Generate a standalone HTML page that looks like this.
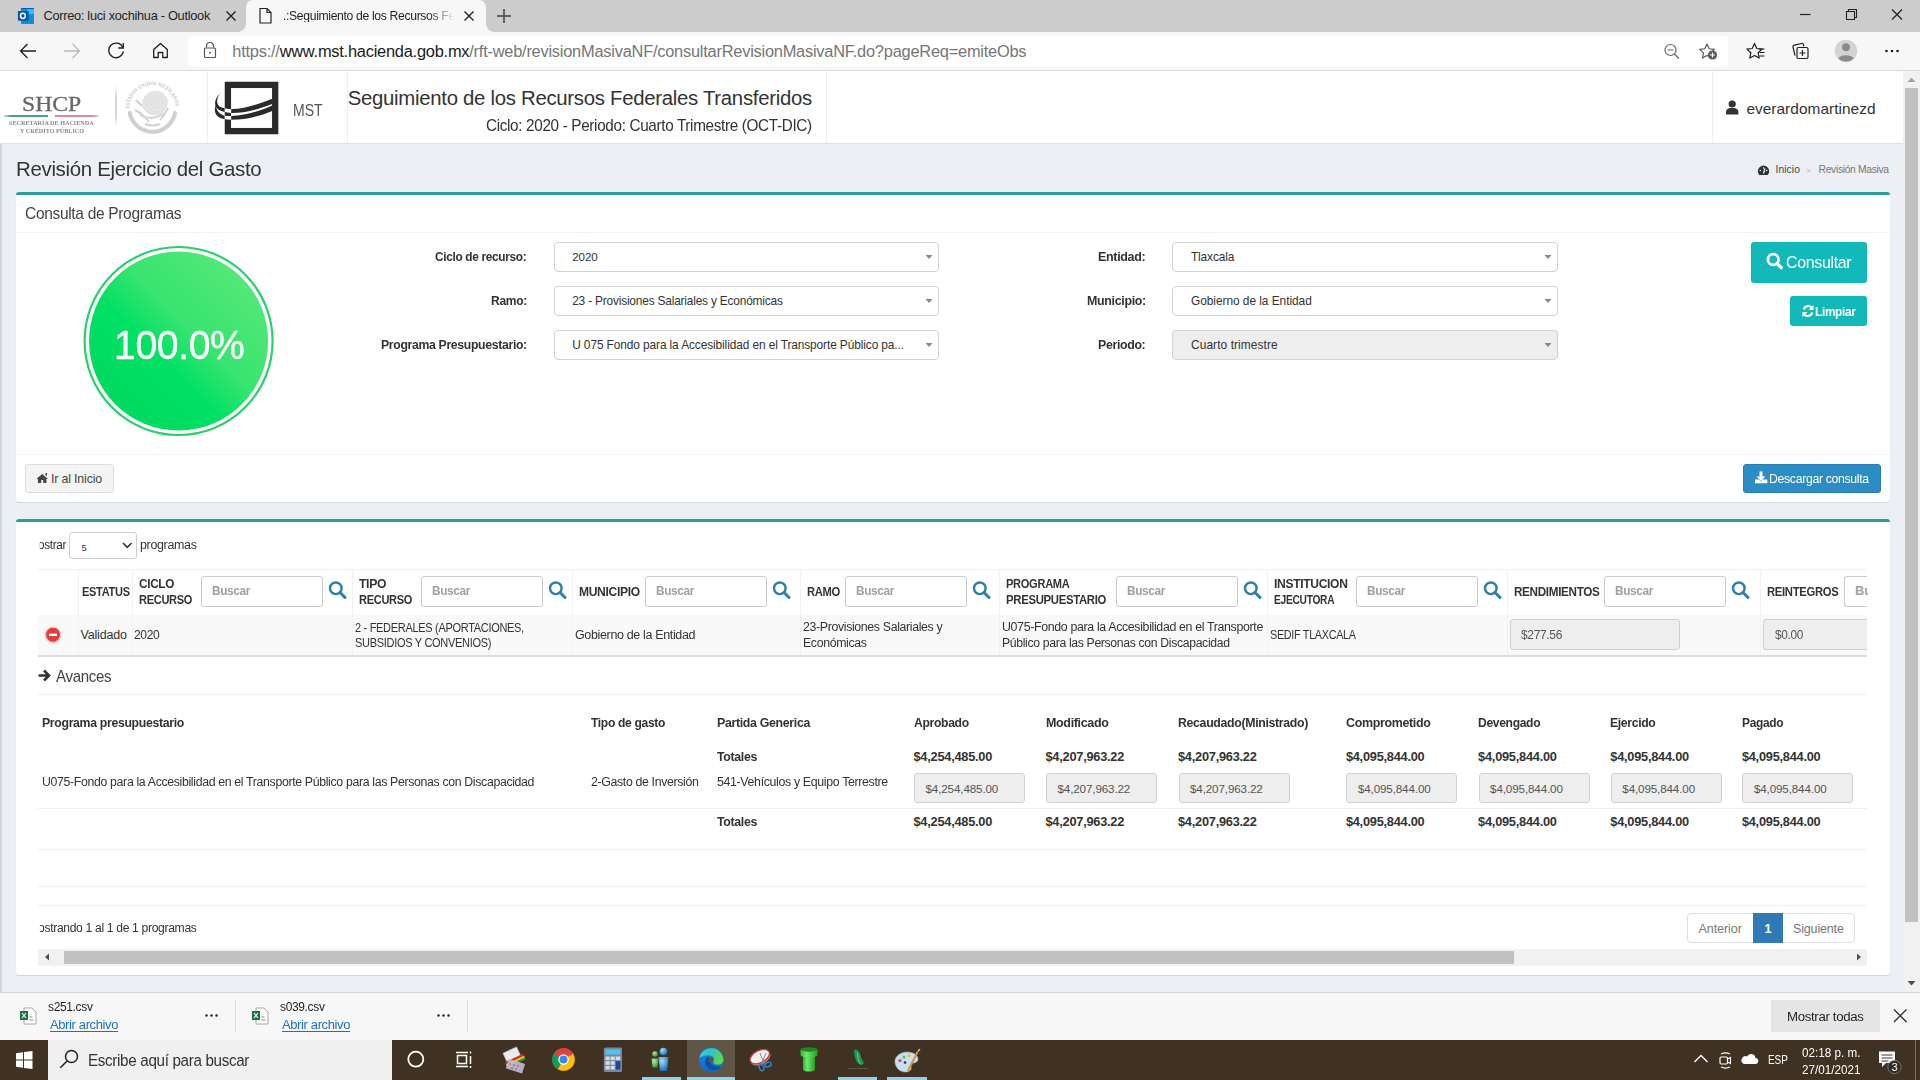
<!DOCTYPE html>
<html><head><meta charset="utf-8">
<style>
*{margin:0;padding:0;box-sizing:border-box}
html,body{width:1920px;height:1080px;overflow:hidden;font-family:"Liberation Sans",sans-serif;background:#ecf0f5;position:relative}
.a{position:absolute}
.t{position:absolute;white-space:nowrap;line-height:1}
svg.ov{position:absolute;left:0;top:0;width:1920px;height:1080px;overflow:visible}
</style></head><body>
<div class="a" style="left:0px;top:0px;width:1920px;height:32px;background:#cccccc;"></div>
<div class="a" style="left:246px;top:0px;width:240px;height:32px;background:#f7f7f7;border-radius:7px 7px 0 0"></div>
<div class="a" style="left:238px;top:24px;width:8px;height:8px;background:radial-gradient(circle at 0 0,#cccccc 7.5px,#f7f7f7 8px)"></div>
<div class="a" style="left:486px;top:24px;width:8px;height:8px;background:radial-gradient(circle at 100% 0,#cccccc 7.5px,#f7f7f7 8px)"></div>
<div class="a" style="left:0px;top:32px;width:1920px;height:38px;background:#f7f7f7;"></div>
<div class="a" style="left:0px;top:70px;width:1920px;height:1px;background:#dadada;"></div>
<div class="a" style="left:188px;top:36px;width:1540px;height:30px;background:#ffffff;border-radius:4px"></div>
<div class="a" style="left:0px;top:71px;width:1903px;height:921px;background:#ecf0f5;"></div>
<div class="a" style="left:0px;top:143px;width:2px;height:849px;background:#d2d6de;"></div>
<div class="a" style="left:0px;top:71px;width:1903px;height:72px;background:#ffffff;"></div>
<div class="a" style="left:0px;top:143px;width:1903px;height:1px;background:#dcdfe5;"></div>
<div class="a" style="left:207px;top:71px;width:1px;height:72px;background:#eeeeee;"></div>
<div class="a" style="left:347px;top:71px;width:1px;height:72px;background:#eeeeee;"></div>
<div class="a" style="left:826px;top:71px;width:1px;height:72px;background:#eeeeee;"></div>
<div class="a" style="left:1712px;top:71px;width:1px;height:72px;background:#eeeeee;"></div>
<div class="a" style="left:4px;top:115px;width:44px;height:2px;background:linear-gradient(90deg,rgba(69,164,136,0.3),#45a488 15%,#45a488)"></div>
<div class="a" style="left:55px;top:115px;width:44px;height:2px;background:linear-gradient(90deg,#e0889a,#e0889a 85%,rgba(224,136,154,0.3))"></div>
<div class="a" style="left:115px;top:85px;width:1.5px;height:43px;background:linear-gradient(180deg,rgba(210,210,210,0),#d4d4d4 30%,#d4d4d4 70%,rgba(210,210,210,0))"></div>
<div class="a" style="left:16px;top:192px;width:1874px;height:310px;background:#ffffff;border-top:3px solid #2a9d9e;border-radius:3px;box-shadow:0 1px 1px rgba(0,0,0,0.12)"></div>
<div class="a" style="left:16px;top:232px;width:1874px;height:1px;background:#f4f4f4;"></div>
<div class="a" style="left:554px;top:242px;width:385px;height:30px;background:#ffffff;border:1px solid #d2d2d2;border-radius:4px"></div>
<div class="a" style="left:554px;top:286px;width:385px;height:30px;background:#ffffff;border:1px solid #d2d2d2;border-radius:4px"></div>
<div class="a" style="left:554px;top:330px;width:385px;height:30px;background:#ffffff;border:1px solid #d2d2d2;border-radius:4px"></div>
<div class="a" style="left:1172px;top:242px;width:386px;height:30px;background:#ffffff;border:1px solid #d2d2d2;border-radius:4px"></div>
<div class="a" style="left:1172px;top:286px;width:386px;height:30px;background:#ffffff;border:1px solid #d2d2d2;border-radius:4px"></div>
<div class="a" style="left:1172px;top:330px;width:386px;height:30px;background:#eeeeee;border:1px solid #d2d2d2;border-radius:4px"></div>
<div class="a" style="left:1751px;top:242px;width:116px;height:41px;background:#13b8b8;border-radius:3px"></div>
<div class="a" style="left:1790px;top:296px;width:77px;height:30px;background:#13b8b8;border-radius:3px"></div>
<div class="a" style="left:16px;top:454px;width:1874px;height:1px;background:#f4f4f4;"></div>
<div class="a" style="left:25px;top:464px;width:89px;height:29px;background:#f4f4f4;border:1px solid #dddddd;border-radius:3px"></div>
<div class="a" style="left:1743px;top:464px;width:138px;height:29px;background:#2c8dc5;border:1px solid #267fb3;border-radius:3px"></div>
<div class="a" style="left:16px;top:519px;width:1874px;height:456px;background:#ffffff;border-top:3px solid #2a9d9e;border-radius:3px;box-shadow:0 1px 1px rgba(0,0,0,0.12)"></div>
<div class="a" style="left:69px;top:532px;width:68px;height:27px;background:#ffffff;border:1px solid #cfcfcf;border-radius:3px"></div>
<div class="a" style="left:38px;top:569px;width:1829px;height:1px;background:#f0f0f0;"></div>
<div class="a" style="left:38px;top:615px;width:1829px;height:41px;background:#f9f9f9;"></div>
<div class="a" style="left:38px;top:655px;width:1829px;height:2px;background:#dddddd;"></div>
<div class="a" style="left:78px;top:570px;width:1px;height:85px;background:#f2f2f2;"></div>
<div class="a" style="left:132px;top:570px;width:1px;height:85px;background:#f2f2f2;"></div>
<div class="a" style="left:352px;top:570px;width:1px;height:85px;background:#f2f2f2;"></div>
<div class="a" style="left:572px;top:570px;width:1px;height:85px;background:#f2f2f2;"></div>
<div class="a" style="left:800px;top:570px;width:1px;height:85px;background:#f2f2f2;"></div>
<div class="a" style="left:999px;top:570px;width:1px;height:85px;background:#f2f2f2;"></div>
<div class="a" style="left:1267px;top:570px;width:1px;height:85px;background:#f2f2f2;"></div>
<div class="a" style="left:1507px;top:570px;width:1px;height:85px;background:#f2f2f2;"></div>
<div class="a" style="left:1760px;top:570px;width:1px;height:85px;background:#f2f2f2;"></div>
<div class="a" style="left:201px;top:576px;width:122px;height:31px;background:#ffffff;border:1px solid #cccccc;border-radius:3px"></div>
<div class="a" style="left:421px;top:576px;width:122px;height:31px;background:#ffffff;border:1px solid #cccccc;border-radius:3px"></div>
<div class="a" style="left:645px;top:576px;width:122px;height:31px;background:#ffffff;border:1px solid #cccccc;border-radius:3px"></div>
<div class="a" style="left:845px;top:576px;width:122px;height:31px;background:#ffffff;border:1px solid #cccccc;border-radius:3px"></div>
<div class="a" style="left:1116px;top:576px;width:122px;height:31px;background:#ffffff;border:1px solid #cccccc;border-radius:3px"></div>
<div class="a" style="left:1356px;top:576px;width:122px;height:31px;background:#ffffff;border:1px solid #cccccc;border-radius:3px"></div>
<div class="a" style="left:1604px;top:576px;width:122px;height:31px;background:#ffffff;border:1px solid #cccccc;border-radius:3px"></div>
<div class="a" style="left:1844px;top:576px;width:23px;height:31px;background:#ffffff;border:1px solid #cccccc;border-right:none;border-radius:3px 0 0 3px"></div>
<div class="a" style="left:1510px;top:619px;width:170px;height:31px;background:#eeeeee;border:1px solid #d0d0d0;border-radius:3px"></div>
<div class="a" style="left:1763px;top:619px;width:104px;height:31px;background:#eeeeee;border:1px solid #d0d0d0;border-right:none;border-radius:3px 0 0 3px"></div>
<div class="a" style="left:38px;top:694px;width:1829px;height:1px;background:#f0f0f0;"></div>
<div class="a" style="left:914px;top:773px;width:111px;height:30px;background:#eeeeee;border:1px solid #d0d0d0;border-radius:3px"></div>
<div class="a" style="left:1046px;top:773px;width:111px;height:30px;background:#eeeeee;border:1px solid #d0d0d0;border-radius:3px"></div>
<div class="a" style="left:1178.5px;top:773px;width:111px;height:30px;background:#eeeeee;border:1px solid #d0d0d0;border-radius:3px"></div>
<div class="a" style="left:1346.4px;top:773px;width:111px;height:30px;background:#eeeeee;border:1px solid #d0d0d0;border-radius:3px"></div>
<div class="a" style="left:1478.6px;top:773px;width:111px;height:30px;background:#eeeeee;border:1px solid #d0d0d0;border-radius:3px"></div>
<div class="a" style="left:1610.8px;top:773px;width:111px;height:30px;background:#eeeeee;border:1px solid #d0d0d0;border-radius:3px"></div>
<div class="a" style="left:1742.4px;top:773px;width:111px;height:30px;background:#eeeeee;border:1px solid #d0d0d0;border-radius:3px"></div>
<div class="a" style="left:38px;top:808px;width:1829px;height:1px;background:#f0f0f0;"></div>
<div class="a" style="left:38px;top:849px;width:1829px;height:1px;background:#f0f0f0;"></div>
<div class="a" style="left:38px;top:886px;width:1829px;height:1px;background:#f0f0f0;"></div>
<div class="a" style="left:38px;top:905px;width:1829px;height:1px;background:#f0f0f0;"></div>
<div class="a" style="left:1687px;top:913px;width:168px;height:30px;background:#ffffff;border:1px solid #dddddd;border-radius:4px"></div>
<div class="a" style="left:1753px;top:913px;width:30px;height:30px;background:#2e79b6;border:1px solid #2e79b6"></div>
<div class="a" style="left:38px;top:949px;width:1829px;height:17px;background:#f1f1f1;"></div>
<div class="a" style="left:64px;top:951px;width:1450px;height:13px;background:#c1c1c1;"></div>
<div class="a" style="left:1903px;top:71px;width:17px;height:921px;background:#f1f1f1;"></div>
<div class="a" style="left:1905px;top:88px;width:13px;height:834px;background:#c1c1c1;"></div>
<div class="a" style="left:0px;top:992px;width:1920px;height:48px;background:#f7f7f7;border-top:1px solid #d6d6d6"></div>
<div class="a" style="left:235px;top:1000px;width:1px;height:32px;background:#dcdcdc;"></div>
<div class="a" style="left:467px;top:1000px;width:1px;height:32px;background:#dcdcdc;"></div>
<div class="a" style="left:1771px;top:1000px;width:109px;height:32px;background:#e5e5e5;border-radius:2px"></div>
<div class="a" style="left:0px;top:1040px;width:1920px;height:40px;background:#403222;"></div>
<div class="a" style="left:48px;top:1040px;width:344px;height:40px;background:#f0f0f0;"></div>
<div class="a" style="left:642px;top:1077px;width:39px;height:3px;background:#8fd4e6;"></div>
<div class="a" style="left:687px;top:1040px;width:48px;height:40px;background:#5f5646;"></div>
<div class="a" style="left:687px;top:1077px;width:48px;height:3px;background:#8fd4e6;"></div>
<div class="a" style="left:838px;top:1077px;width:39px;height:3px;background:#8fd4e6;"></div>
<div class="a" style="left:887px;top:1077px;width:40px;height:3px;background:#8fd4e6;"></div>
<div class="a" style="left:1915px;top:1040px;width:1px;height:40px;background:#7a7060;"></div>
<div class="t" style="left:43.5px;top:9.9px;font-size:12.79px;letter-spacing:-0.290px;font-weight:normal;color:#1f1f1f;font-family:'Liberation Sans',sans-serif;">Correo: luci xochihua - Outlook</div>
<div class="t" style="left:283.2px;top:9.6px;font-size:12.50px;letter-spacing:-0.350px;font-weight:normal;color:#1f1f1f;font-family:'Liberation Sans',sans-serif;transform:scaleX(0.9742);transform-origin:0 0;-webkit-mask-image:linear-gradient(90deg,#000 85%,transparent 100%)">.:Seguimiento de los Recursos Fe</div>
<div class="t" style="left:232.3px;top:43.0px;font-size:16.42px;letter-spacing:-0.239px;font-weight:normal;color:#767676;font-family:'Liberation Sans',sans-serif;">https://<span style="color:#1a1a1a">www.mst.hacienda.gob.mx</span>/rft-web/revisionMasivaNF/consultarRevisionMasivaNF.do?pageReq=emiteObs</div>
<div class="t" style="left:22.1px;top:92.7px;font-size:21.95px;letter-spacing:0.000px;font-weight:normal;color:#666668;font-family:'Liberation Serif',sans-serif;transform:scaleX(1.0790);transform-origin:0 0;-webkit-text-stroke:0.3px #666668">SHCP</div>
<div class="t" style="left:9.2px;top:120.3px;font-size:6.25px;letter-spacing:0.000px;font-weight:bold;color:#8a8a8a;font-family:'Liberation Serif',sans-serif;transform:scaleX(0.9847);transform-origin:0 0;">SECRETARÍA DE HACIENDA</div>
<div class="t" style="left:19.6px;top:127.8px;font-size:6.25px;letter-spacing:0.000px;font-weight:bold;color:#8a8a8a;font-family:'Liberation Serif',sans-serif;transform:scaleX(0.9872);transform-origin:0 0;">Y CRÉDITO PÚBLICO</div>
<div class="t" style="left:293.3px;top:101.5px;font-size:16.42px;letter-spacing:0.000px;font-weight:normal;color:#555555;font-family:'Liberation Sans',sans-serif;transform:scaleX(0.8552);transform-origin:0 0;">MST</div>
<div class="t" style="left:347.7px;top:87.5px;font-size:20.35px;letter-spacing:-0.283px;font-weight:normal;color:#333;font-family:'Liberation Sans',sans-serif;">Seguimiento de los Recursos Federales Transferidos</div>
<div class="t" style="left:485.9px;top:118.1px;font-size:15.70px;letter-spacing:-0.350px;font-weight:normal;color:#333;font-family:'Liberation Sans',sans-serif;transform:scaleX(0.9748);transform-origin:0 0;">Ciclo: 2020 - Periodo: Cuarto Trimestre (OCT-DIC)</div>
<div class="t" style="left:1746.4px;top:100.7px;font-size:15.41px;letter-spacing:0.039px;font-weight:normal;color:#333;font-family:'Liberation Sans',sans-serif;">everardomartinezd</div>
<div class="t" style="left:15.9px;top:158.7px;font-size:20.93px;letter-spacing:-0.350px;font-weight:normal;color:#333;font-family:'Liberation Sans',sans-serif;transform:scaleX(0.9787);transform-origin:0 0;">Revisión Ejercicio del Gasto</div>
<div class="t" style="left:1775.6px;top:165.4px;font-size:10.32px;letter-spacing:0.046px;font-weight:normal;color:#444;font-family:'Liberation Sans',sans-serif;">Inicio</div>
<div class="t" style="left:1806.2px;top:166.6px;font-size:7.99px;letter-spacing:0.000px;font-weight:normal;color:#aaa;font-family:'Liberation Sans',sans-serif;">&gt;</div>
<div class="t" style="left:1818.6px;top:165.4px;font-size:10.32px;letter-spacing:-0.336px;font-weight:normal;color:#777;font-family:'Liberation Sans',sans-serif;">Revisión Masiva</div>
<div class="t" style="left:24.9px;top:205.6px;font-size:15.99px;letter-spacing:-0.350px;font-weight:normal;color:#444;font-family:'Liberation Sans',sans-serif;transform:scaleX(0.9730);transform-origin:0 0;">Consulta de Programas</div>
<div class="t" style="left:435.0px;top:250.3px;font-size:13.08px;letter-spacing:-0.350px;font-weight:bold;color:#333;font-family:'Liberation Sans',sans-serif;transform:scaleX(0.9057);transform-origin:0 0;">Ciclo de recurso:</div>
<div class="t" style="left:490.5px;top:294.3px;font-size:13.08px;letter-spacing:-0.350px;font-weight:bold;color:#333;font-family:'Liberation Sans',sans-serif;transform:scaleX(0.9215);transform-origin:0 0;">Ramo:</div>
<div class="t" style="left:380.5px;top:338.3px;font-size:13.08px;letter-spacing:-0.350px;font-weight:bold;color:#333;font-family:'Liberation Sans',sans-serif;transform:scaleX(0.9358);transform-origin:0 0;">Programa Presupuestario:</div>
<div class="t" style="left:1098.0px;top:250.3px;font-size:13.08px;letter-spacing:-0.350px;font-weight:bold;color:#333;font-family:'Liberation Sans',sans-serif;transform:scaleX(0.9568);transform-origin:0 0;">Entidad:</div>
<div class="t" style="left:1086.5px;top:294.3px;font-size:13.08px;letter-spacing:-0.350px;font-weight:bold;color:#333;font-family:'Liberation Sans',sans-serif;transform:scaleX(0.9513);transform-origin:0 0;">Municipio:</div>
<div class="t" style="left:1098.0px;top:338.3px;font-size:13.08px;letter-spacing:-0.350px;font-weight:bold;color:#333;font-family:'Liberation Sans',sans-serif;transform:scaleX(0.9429);transform-origin:0 0;">Periodo:</div>
<div class="t" style="left:572.2px;top:251.2px;font-size:11.63px;letter-spacing:-0.085px;font-weight:normal;color:#333;font-family:'Liberation Sans',sans-serif;">2020</div>
<div class="t" style="left:572.2px;top:296.0px;font-size:11.92px;letter-spacing:-0.197px;font-weight:normal;color:#333;font-family:'Liberation Sans',sans-serif;">23 - Provisiones Salariales y Económicas</div>
<div class="t" style="left:572.2px;top:340.0px;font-size:11.92px;letter-spacing:-0.111px;font-weight:normal;color:#333;font-family:'Liberation Sans',sans-serif;">U 075 Fondo para la Accesibilidad en el Transporte Público pa...</div>
<div class="t" style="left:1191.0px;top:252.0px;font-size:11.92px;letter-spacing:-0.149px;font-weight:normal;color:#333;font-family:'Liberation Sans',sans-serif;">Tlaxcala</div>
<div class="t" style="left:1191.0px;top:296.0px;font-size:11.92px;letter-spacing:-0.047px;font-weight:normal;color:#333;font-family:'Liberation Sans',sans-serif;">Gobierno de la Entidad</div>
<div class="t" style="left:1191.0px;top:340.0px;font-size:11.92px;letter-spacing:0.086px;font-weight:normal;color:#333;font-family:'Liberation Sans',sans-serif;">Cuarto trimestre</div>
<div class="t" style="left:1786.3px;top:254.6px;font-size:16.86px;letter-spacing:-0.350px;font-weight:normal;color:#ffffff;font-family:'Liberation Sans',sans-serif;transform:scaleX(0.9470);transform-origin:0 0;">Consultar</div>
<div class="t" style="left:1814.5px;top:305.2px;font-size:13.23px;letter-spacing:-0.350px;font-weight:bold;color:#ffffff;font-family:'Liberation Sans',sans-serif;transform:scaleX(0.8961);transform-origin:0 0;">Limpiar</div>
<div class="t" style="left:50.9px;top:472.6px;font-size:12.35px;letter-spacing:-0.137px;font-weight:normal;color:#444;font-family:'Liberation Sans',sans-serif;">Ir al Inicio</div>
<div class="t" style="left:1768.9px;top:472.8px;font-size:12.94px;letter-spacing:-0.350px;font-weight:normal;color:#ffffff;font-family:'Liberation Sans',sans-serif;transform:scaleX(0.9489);transform-origin:0 0;">Descargar consulta</div>
<div class="t" style="left:37.5px;top:538.2px;font-size:13.26px;letter-spacing:-0.350px;font-weight:normal;color:#333;font-family:'Liberation Sans',sans-serif;transform:scaleX(0.8877);transform-origin:0 0;clip-path:inset(0 0 0 2px)">ostrar</div>
<div class="t" style="left:81.6px;top:543.4px;font-size:9.45px;letter-spacing:0.000px;font-weight:normal;color:#333;font-family:'Liberation Sans',sans-serif;">5</div>
<div class="t" style="left:139.5px;top:538.2px;font-size:13.26px;letter-spacing:-0.350px;font-weight:normal;color:#333;font-family:'Liberation Sans',sans-serif;transform:scaleX(0.9399);transform-origin:0 0;">programas</div>
<div class="t" style="left:81.5px;top:585.7px;font-size:12.65px;letter-spacing:-0.350px;font-weight:bold;color:#333;font-family:'Liberation Sans',sans-serif;transform:scaleX(0.8737);transform-origin:0 0;">ESTATUS</div>
<div class="t" style="left:139.0px;top:577.7px;font-size:12.65px;letter-spacing:-0.350px;font-weight:bold;color:#333;font-family:'Liberation Sans',sans-serif;transform:scaleX(0.9327);transform-origin:0 0;">CICLO</div>
<div class="t" style="left:139.0px;top:594.4px;font-size:12.65px;letter-spacing:-0.350px;font-weight:bold;color:#333;font-family:'Liberation Sans',sans-serif;transform:scaleX(0.8733);transform-origin:0 0;">RECURSO</div>
<div class="t" style="left:359.0px;top:577.7px;font-size:12.65px;letter-spacing:-0.350px;font-weight:bold;color:#333;font-family:'Liberation Sans',sans-serif;transform:scaleX(0.9623);transform-origin:0 0;">TIPO</div>
<div class="t" style="left:359.0px;top:594.4px;font-size:12.65px;letter-spacing:-0.350px;font-weight:bold;color:#333;font-family:'Liberation Sans',sans-serif;transform:scaleX(0.8733);transform-origin:0 0;">RECURSO</div>
<div class="t" style="left:578.8px;top:585.7px;font-size:12.65px;letter-spacing:-0.350px;font-weight:bold;color:#333;font-family:'Liberation Sans',sans-serif;transform:scaleX(0.9554);transform-origin:0 0;">MUNICIPIO</div>
<div class="t" style="left:806.7px;top:585.7px;font-size:12.65px;letter-spacing:-0.350px;font-weight:bold;color:#333;font-family:'Liberation Sans',sans-serif;transform:scaleX(0.8856);transform-origin:0 0;">RAMO</div>
<div class="t" style="left:1006.1px;top:577.7px;font-size:12.65px;letter-spacing:-0.350px;font-weight:bold;color:#333;font-family:'Liberation Sans',sans-serif;transform:scaleX(0.8772);transform-origin:0 0;">PROGRAMA</div>
<div class="t" style="left:1006.1px;top:594.4px;font-size:12.65px;letter-spacing:-0.350px;font-weight:bold;color:#333;font-family:'Liberation Sans',sans-serif;transform:scaleX(0.8975);transform-origin:0 0;">PRESUPUESTARIO</div>
<div class="t" style="left:1273.8px;top:577.7px;font-size:12.65px;letter-spacing:-0.350px;font-weight:bold;color:#333;font-family:'Liberation Sans',sans-serif;transform:scaleX(0.9560);transform-origin:0 0;">INSTITUCION</div>
<div class="t" style="left:1273.8px;top:594.4px;font-size:12.65px;letter-spacing:-0.350px;font-weight:bold;color:#333;font-family:'Liberation Sans',sans-serif;transform:scaleX(0.8082);transform-origin:0 0;">EJECUTORA</div>
<div class="t" style="left:1513.9px;top:585.7px;font-size:12.65px;letter-spacing:-0.350px;font-weight:bold;color:#333;font-family:'Liberation Sans',sans-serif;transform:scaleX(0.9248);transform-origin:0 0;">RENDIMIENTOS</div>
<div class="t" style="left:1767.1px;top:585.7px;font-size:12.65px;letter-spacing:-0.350px;font-weight:bold;color:#333;font-family:'Liberation Sans',sans-serif;transform:scaleX(0.8910);transform-origin:0 0;">REINTEGROS</div>
<div class="t" style="left:212.0px;top:585.4px;font-size:12.79px;letter-spacing:-0.350px;font-weight:bold;color:#a0a0a0;font-family:'Liberation Sans',sans-serif;transform:scaleX(0.9226);transform-origin:0 0;">Buscar</div>
<div class="t" style="left:432.0px;top:585.4px;font-size:12.79px;letter-spacing:-0.350px;font-weight:bold;color:#a0a0a0;font-family:'Liberation Sans',sans-serif;transform:scaleX(0.9226);transform-origin:0 0;">Buscar</div>
<div class="t" style="left:656.0px;top:585.4px;font-size:12.79px;letter-spacing:-0.350px;font-weight:bold;color:#a0a0a0;font-family:'Liberation Sans',sans-serif;transform:scaleX(0.9226);transform-origin:0 0;">Buscar</div>
<div class="t" style="left:856.0px;top:585.4px;font-size:12.79px;letter-spacing:-0.350px;font-weight:bold;color:#a0a0a0;font-family:'Liberation Sans',sans-serif;transform:scaleX(0.9226);transform-origin:0 0;">Buscar</div>
<div class="t" style="left:1127.0px;top:585.4px;font-size:12.79px;letter-spacing:-0.350px;font-weight:bold;color:#a0a0a0;font-family:'Liberation Sans',sans-serif;transform:scaleX(0.9226);transform-origin:0 0;">Buscar</div>
<div class="t" style="left:1367.0px;top:585.4px;font-size:12.79px;letter-spacing:-0.350px;font-weight:bold;color:#a0a0a0;font-family:'Liberation Sans',sans-serif;transform:scaleX(0.9226);transform-origin:0 0;">Buscar</div>
<div class="t" style="left:1615.0px;top:585.4px;font-size:12.79px;letter-spacing:-0.350px;font-weight:bold;color:#a0a0a0;font-family:'Liberation Sans',sans-serif;transform:scaleX(0.9226);transform-origin:0 0;">Buscar</div>
<div class="t" style="left:1855.0px;top:585.4px;font-size:12.79px;letter-spacing:0.000px;font-weight:bold;color:#a0a0a0;font-family:'Liberation Sans',sans-serif;clip-path:inset(0 4px 0 0)">Bu</div>
<div class="t" style="left:80.5px;top:628.9px;font-size:12.50px;letter-spacing:-0.178px;font-weight:normal;color:#333;font-family:'Liberation Sans',sans-serif;">Validado</div>
<div class="t" style="left:134.2px;top:628.9px;font-size:12.50px;letter-spacing:-0.350px;font-weight:normal;color:#333;font-family:'Liberation Sans',sans-serif;transform:scaleX(0.9633);transform-origin:0 0;">2020</div>
<div class="t" style="left:354.5px;top:621.5px;font-size:12.50px;letter-spacing:-0.350px;font-weight:normal;color:#333;font-family:'Liberation Sans',sans-serif;transform:scaleX(0.8801);transform-origin:0 0;">2 - FEDERALES (APORTACIONES,</div>
<div class="t" style="left:354.5px;top:637.1px;font-size:12.50px;letter-spacing:-0.350px;font-weight:normal;color:#333;font-family:'Liberation Sans',sans-serif;transform:scaleX(0.8820);transform-origin:0 0;">SUBSIDIOS Y CONVENIOS)</div>
<div class="t" style="left:574.8px;top:628.9px;font-size:12.50px;letter-spacing:-0.350px;font-weight:normal;color:#333;font-family:'Liberation Sans',sans-serif;transform:scaleX(0.9996);transform-origin:0 0;">Gobierno de la Entidad</div>
<div class="t" style="left:802.7px;top:620.8px;font-size:12.50px;letter-spacing:-0.350px;font-weight:normal;color:#333;font-family:'Liberation Sans',sans-serif;transform:scaleX(0.9860);transform-origin:0 0;">23-Provisiones Salariales y</div>
<div class="t" style="left:802.7px;top:637.3px;font-size:12.50px;letter-spacing:-0.350px;font-weight:normal;color:#333;font-family:'Liberation Sans',sans-serif;transform:scaleX(0.9837);transform-origin:0 0;">Económicas</div>
<div class="t" style="left:1001.7px;top:620.8px;font-size:12.50px;letter-spacing:-0.350px;font-weight:normal;color:#333;font-family:'Liberation Sans',sans-serif;transform:scaleX(0.9899);transform-origin:0 0;">U075-Fondo para la Accesibilidad en el Transporte</div>
<div class="t" style="left:1001.7px;top:637.3px;font-size:12.50px;letter-spacing:-0.350px;font-weight:normal;color:#333;font-family:'Liberation Sans',sans-serif;transform:scaleX(0.9784);transform-origin:0 0;">Público para las Personas con Discapacidad</div>
<div class="t" style="left:1270.3px;top:628.9px;font-size:12.50px;letter-spacing:-0.350px;font-weight:normal;color:#333;font-family:'Liberation Sans',sans-serif;transform:scaleX(0.8648);transform-origin:0 0;">SEDIF TLAXCALA</div>
<div class="t" style="left:1521.0px;top:629.1px;font-size:12.50px;letter-spacing:-0.350px;font-weight:normal;color:#555;font-family:'Liberation Sans',sans-serif;transform:scaleX(0.9603);transform-origin:0 0;">$277.56</div>
<div class="t" style="left:1774.5px;top:629.1px;font-size:12.50px;letter-spacing:-0.350px;font-weight:normal;color:#555;font-family:'Liberation Sans',sans-serif;transform:scaleX(0.9496);transform-origin:0 0;">$0.00</div>
<div class="t" style="left:55.9px;top:669.4px;font-size:15.99px;letter-spacing:-0.350px;font-weight:normal;color:#444;font-family:'Liberation Sans',sans-serif;transform:scaleX(0.9438);transform-origin:0 0;">Avances</div>
<div class="t" style="left:42.0px;top:716.9px;font-size:12.79px;letter-spacing:-0.350px;font-weight:bold;color:#333;font-family:'Liberation Sans',sans-serif;transform:scaleX(0.9623);transform-origin:0 0;">Programa presupuestario</div>
<div class="t" style="left:591.0px;top:716.9px;font-size:12.79px;letter-spacing:-0.350px;font-weight:bold;color:#333;font-family:'Liberation Sans',sans-serif;transform:scaleX(0.9452);transform-origin:0 0;">Tipo de gasto</div>
<div class="t" style="left:717.0px;top:716.9px;font-size:12.79px;letter-spacing:-0.350px;font-weight:bold;color:#333;font-family:'Liberation Sans',sans-serif;transform:scaleX(0.9687);transform-origin:0 0;">Partida Generica</div>
<div class="t" style="left:913.5px;top:716.9px;font-size:12.79px;letter-spacing:-0.350px;font-weight:bold;color:#333;font-family:'Liberation Sans',sans-serif;transform:scaleX(0.9526);transform-origin:0 0;">Aprobado</div>
<div class="t" style="left:1045.5px;top:716.9px;font-size:12.79px;letter-spacing:-0.350px;font-weight:bold;color:#333;font-family:'Liberation Sans',sans-serif;transform:scaleX(0.9774);transform-origin:0 0;">Modificado</div>
<div class="t" style="left:1178.0px;top:716.9px;font-size:12.79px;letter-spacing:-0.350px;font-weight:bold;color:#333;font-family:'Liberation Sans',sans-serif;transform:scaleX(0.9650);transform-origin:0 0;">Recaudado(Ministrado)</div>
<div class="t" style="left:1345.9px;top:716.9px;font-size:12.79px;letter-spacing:-0.350px;font-weight:bold;color:#333;font-family:'Liberation Sans',sans-serif;transform:scaleX(0.9747);transform-origin:0 0;">Comprometido</div>
<div class="t" style="left:1478.1px;top:716.9px;font-size:12.79px;letter-spacing:-0.350px;font-weight:bold;color:#333;font-family:'Liberation Sans',sans-serif;transform:scaleX(0.9464);transform-origin:0 0;">Devengado</div>
<div class="t" style="left:1610.3px;top:716.9px;font-size:12.79px;letter-spacing:-0.350px;font-weight:bold;color:#333;font-family:'Liberation Sans',sans-serif;transform:scaleX(0.9537);transform-origin:0 0;">Ejercido</div>
<div class="t" style="left:1741.9px;top:716.9px;font-size:12.79px;letter-spacing:-0.350px;font-weight:bold;color:#333;font-family:'Liberation Sans',sans-serif;transform:scaleX(0.9336);transform-origin:0 0;">Pagado</div>
<div class="t" style="left:717.0px;top:750.6px;font-size:12.79px;letter-spacing:-0.350px;font-weight:bold;color:#333;font-family:'Liberation Sans',sans-serif;transform:scaleX(0.9680);transform-origin:0 0;">Totales</div>
<div class="t" style="left:717.0px;top:815.6px;font-size:12.79px;letter-spacing:-0.350px;font-weight:bold;color:#333;font-family:'Liberation Sans',sans-serif;transform:scaleX(0.9680);transform-origin:0 0;">Totales</div>
<div class="t" style="left:913.5px;top:750.6px;font-size:12.79px;letter-spacing:-0.242px;font-weight:bold;color:#333;font-family:'Liberation Sans',sans-serif;">$4,254,485.00</div>
<div class="t" style="left:913.5px;top:815.6px;font-size:12.79px;letter-spacing:-0.242px;font-weight:bold;color:#333;font-family:'Liberation Sans',sans-serif;">$4,254,485.00</div>
<div class="t" style="left:925.5px;top:783.1px;font-size:11.63px;letter-spacing:-0.129px;font-weight:normal;color:#555;font-family:'Liberation Sans',sans-serif;">$4,254,485.00</div>
<div class="t" style="left:1045.5px;top:750.6px;font-size:12.79px;letter-spacing:-0.242px;font-weight:bold;color:#333;font-family:'Liberation Sans',sans-serif;">$4,207,963.22</div>
<div class="t" style="left:1045.5px;top:815.6px;font-size:12.79px;letter-spacing:-0.242px;font-weight:bold;color:#333;font-family:'Liberation Sans',sans-serif;">$4,207,963.22</div>
<div class="t" style="left:1057.5px;top:783.1px;font-size:11.63px;letter-spacing:-0.129px;font-weight:normal;color:#555;font-family:'Liberation Sans',sans-serif;">$4,207,963.22</div>
<div class="t" style="left:1178.0px;top:750.6px;font-size:12.79px;letter-spacing:-0.242px;font-weight:bold;color:#333;font-family:'Liberation Sans',sans-serif;">$4,207,963.22</div>
<div class="t" style="left:1178.0px;top:815.6px;font-size:12.79px;letter-spacing:-0.242px;font-weight:bold;color:#333;font-family:'Liberation Sans',sans-serif;">$4,207,963.22</div>
<div class="t" style="left:1190.0px;top:783.1px;font-size:11.63px;letter-spacing:-0.129px;font-weight:normal;color:#555;font-family:'Liberation Sans',sans-serif;">$4,207,963.22</div>
<div class="t" style="left:1345.9px;top:750.6px;font-size:12.79px;letter-spacing:-0.242px;font-weight:bold;color:#333;font-family:'Liberation Sans',sans-serif;">$4,095,844.00</div>
<div class="t" style="left:1345.9px;top:815.6px;font-size:12.79px;letter-spacing:-0.242px;font-weight:bold;color:#333;font-family:'Liberation Sans',sans-serif;">$4,095,844.00</div>
<div class="t" style="left:1357.9px;top:783.1px;font-size:11.63px;letter-spacing:-0.129px;font-weight:normal;color:#555;font-family:'Liberation Sans',sans-serif;">$4,095,844.00</div>
<div class="t" style="left:1478.1px;top:750.6px;font-size:12.79px;letter-spacing:-0.242px;font-weight:bold;color:#333;font-family:'Liberation Sans',sans-serif;">$4,095,844.00</div>
<div class="t" style="left:1478.1px;top:815.6px;font-size:12.79px;letter-spacing:-0.242px;font-weight:bold;color:#333;font-family:'Liberation Sans',sans-serif;">$4,095,844.00</div>
<div class="t" style="left:1490.1px;top:783.1px;font-size:11.63px;letter-spacing:-0.129px;font-weight:normal;color:#555;font-family:'Liberation Sans',sans-serif;">$4,095,844.00</div>
<div class="t" style="left:1610.3px;top:750.6px;font-size:12.79px;letter-spacing:-0.242px;font-weight:bold;color:#333;font-family:'Liberation Sans',sans-serif;">$4,095,844.00</div>
<div class="t" style="left:1610.3px;top:815.6px;font-size:12.79px;letter-spacing:-0.242px;font-weight:bold;color:#333;font-family:'Liberation Sans',sans-serif;">$4,095,844.00</div>
<div class="t" style="left:1622.3px;top:783.1px;font-size:11.63px;letter-spacing:-0.129px;font-weight:normal;color:#555;font-family:'Liberation Sans',sans-serif;">$4,095,844.00</div>
<div class="t" style="left:1741.9px;top:750.6px;font-size:12.79px;letter-spacing:-0.242px;font-weight:bold;color:#333;font-family:'Liberation Sans',sans-serif;">$4,095,844.00</div>
<div class="t" style="left:1741.9px;top:815.6px;font-size:12.79px;letter-spacing:-0.242px;font-weight:bold;color:#333;font-family:'Liberation Sans',sans-serif;">$4,095,844.00</div>
<div class="t" style="left:1753.9px;top:783.1px;font-size:11.63px;letter-spacing:-0.129px;font-weight:normal;color:#555;font-family:'Liberation Sans',sans-serif;">$4,095,844.00</div>
<div class="t" style="left:42.0px;top:776.3px;font-size:12.50px;letter-spacing:-0.350px;font-weight:normal;color:#333;font-family:'Liberation Sans',sans-serif;transform:scaleX(0.9855);transform-origin:0 0;">U075-Fondo para la Accesibilidad en el Transporte Público para las Personas con Discapacidad</div>
<div class="t" style="left:591.0px;top:776.3px;font-size:12.50px;letter-spacing:-0.350px;font-weight:normal;color:#333;font-family:'Liberation Sans',sans-serif;transform:scaleX(0.9862);transform-origin:0 0;">2-Gasto de Inversión</div>
<div class="t" style="left:717.0px;top:776.3px;font-size:12.50px;letter-spacing:-0.350px;font-weight:normal;color:#333;font-family:'Liberation Sans',sans-serif;transform:scaleX(0.9890);transform-origin:0 0;">541-Vehículos y Equipo Terrestre</div>
<div class="t" style="left:37.5px;top:922.3px;font-size:12.50px;letter-spacing:-0.350px;font-weight:normal;color:#333;font-family:'Liberation Sans',sans-serif;transform:scaleX(0.9713);transform-origin:0 0;clip-path:inset(0 0 0 2px)">ostrando 1 al 1 de 1 programas</div>
<div class="t" style="left:1698.5px;top:923.1px;font-size:12.50px;letter-spacing:-0.056px;font-weight:normal;color:#777;font-family:'Liberation Sans',sans-serif;">Anterior</div>
<div class="t" style="left:1764.5px;top:923.1px;font-size:12.50px;letter-spacing:0.000px;font-weight:bold;color:#ffffff;font-family:'Liberation Sans',sans-serif;">1</div>
<div class="t" style="left:1793.0px;top:923.1px;font-size:12.50px;letter-spacing:-0.156px;font-weight:normal;color:#777;font-family:'Liberation Sans',sans-serif;">Siguiente</div>
<div class="t" style="left:47.5px;top:1000.6px;font-size:12.79px;letter-spacing:-0.350px;font-weight:normal;color:#1f1f1f;font-family:'Liberation Sans',sans-serif;transform:scaleX(0.9348);transform-origin:0 0;">s251.csv</div>
<div class="t" style="left:49.5px;top:1017.8px;font-size:13.08px;letter-spacing:-0.350px;font-weight:normal;color:#1a6fc9;font-family:'Liberation Sans',sans-serif;transform:scaleX(0.9883);transform-origin:0 0;text-decoration:underline;text-underline-offset:2px">Abrir archivo</div>
<div class="t" style="left:279.5px;top:1000.6px;font-size:12.79px;letter-spacing:-0.350px;font-weight:normal;color:#1f1f1f;font-family:'Liberation Sans',sans-serif;transform:scaleX(0.9348);transform-origin:0 0;">s039.csv</div>
<div class="t" style="left:281.5px;top:1017.8px;font-size:13.08px;letter-spacing:-0.350px;font-weight:normal;color:#1a6fc9;font-family:'Liberation Sans',sans-serif;transform:scaleX(0.9883);transform-origin:0 0;text-decoration:underline;text-underline-offset:2px">Abrir archivo</div>
<div class="t" style="left:1787.0px;top:1009.8px;font-size:13.66px;letter-spacing:-0.350px;font-weight:normal;color:#1f1f1f;font-family:'Liberation Sans',sans-serif;transform:scaleX(0.9701);transform-origin:0 0;">Mostrar todas</div>
<div class="t" style="left:87.9px;top:1052.2px;font-size:16.13px;letter-spacing:-0.350px;font-weight:normal;color:#333;font-family:'Liberation Sans',sans-serif;transform:scaleX(0.9435);transform-origin:0 0;">Escribe aquí para buscar</div>
<div class="t" style="left:1768.0px;top:1054.3px;font-size:12.50px;letter-spacing:0.000px;font-weight:normal;color:#ffffff;font-family:'Liberation Sans',sans-serif;transform:scaleX(0.7946);transform-origin:0 0;">ESP</div>
<div class="t" style="left:1802.0px;top:1045.8px;font-size:13.08px;letter-spacing:0.000px;font-weight:normal;color:#ffffff;font-family:'Liberation Sans',sans-serif;transform:scaleX(0.8926);transform-origin:0 0;">02:18 p. m.</div>
<div class="t" style="left:1802.0px;top:1062.8px;font-size:13.08px;letter-spacing:0.000px;font-weight:normal;color:#ffffff;font-family:'Liberation Sans',sans-serif;transform:scaleX(0.8922);transform-origin:0 0;">27/01/2021</div>
<svg class="ov" width="1920" height="1080" viewBox="0 0 1920 1080"><rect x="21" y="8" width="12.8" height="15.8" fill="#1490df"/><rect x="21" y="8" width="12.8" height="1.2" fill="#0a5cb0"/><rect x="27" y="9.2" width="6.8" height="5" fill="#28c8f6"/><path d="M21 23.8l12.8-10.5v10.5z" fill="#0f8ad8"/><rect x="17.9" y="10.9" width="10.8" height="9.8" rx="0.8" fill="#0358a8"/><ellipse cx="22.9" cy="15.8" rx="2.4" ry="2.6" fill="none" stroke="#fff" stroke-width="1.5"/>
<path d="M226.5 11.5l9 9M235.5 11.5l-9 9" stroke="#222" stroke-width="1.4"/>
<path d="M260 8.5h7l4 4v10.5h-11z M267 8.5v4h4" fill="none" stroke="#222" stroke-width="1.2"/>
<path d="M464.5 11.5l9 9M473.5 11.5l-9 9" stroke="#222" stroke-width="1.4"/>
<path d="M504 9v14M497 16h14" stroke="#444" stroke-width="1.5"/>
<path d="M1800 14.5h10.5" stroke="#222" stroke-width="1.2"/>
<path d="M1846.5 11.5h8v8h-8z M1848.5 11.5v-2h8v8h-2" fill="none" stroke="#222" stroke-width="1.1"/>
<path d="M1892 9.5l10 10M1902 9.5l-10 10" stroke="#222" stroke-width="1.2"/>
<path d="M20.5 51h15.5M27.5 44l-7 7 7 7" fill="none" stroke="#1f1f1f" stroke-width="1.3"/>
<path d="M64 51h15.5M72.5 44l7 7-7 7" fill="none" stroke="#b9b9b9" stroke-width="1.3"/>
<path d="M122.8 47.5A7.3 7.3 0 1 0 123.3 51.5" fill="none" stroke="#1f1f1f" stroke-width="1.3"/><path d="M123.3 43v5h-5" fill="none" stroke="#1f1f1f" stroke-width="1.3"/>
<path d="M153.7 57.5v-8l6.8-6 6.8 6v8h-4.5v-5h-4.6v5z" fill="none" stroke="#1f1f1f" stroke-width="1.3" stroke-linejoin="round"/>
<path d="M206.5 47.5v-1.5a3.5 3.5 0 0 1 7 0v1.5" fill="none" stroke="#555" stroke-width="1.2"/><rect x="204.5" y="48" width="11" height="9.5" rx="1" fill="none" stroke="#555" stroke-width="1.2"/><circle cx="210" cy="52.7" r="1" fill="#555"/>
<circle cx="1670.5" cy="50" r="5.5" fill="none" stroke="#666" stroke-width="1.2"/><path d="M1667.5 50h6M1674.5 54l4.5 4.5" stroke="#666" stroke-width="1.2"/>
<path d="M1707 44l2.2 4.8 5.2.6-3.9 3.5 1 5.2-4.5-2.6-4.5 2.6 1-5.2-3.9-3.5 5.2-.6z" fill="none" stroke="#555" stroke-width="1.1" stroke-linejoin="round"/><circle cx="1712.5" cy="55" r="4.6" fill="#5c5c5c"/><path d="M1712.5 52.5v5M1710 55h5" stroke="#fff" stroke-width="1.1"/>
<path d="M1754.5 43.5l2.3 5 5.3.6-4 3.6 1.1 5.4-4.7-2.7-4.7 2.7 1.1-5.4-4-3.6 5.3-.6z" fill="none" stroke="#1f1f1f" stroke-width="1.2" stroke-linejoin="round"/><path d="M1758.5 49h6M1759.5 52.5h5M1759.5 56h5" stroke="#1f1f1f" stroke-width="1.2"/>
<path d="M1795 55.5l-2-8.5a1.5 1.5 0 0 1 1.2-1.8l7.5-1.7a1.5 1.5 0 0 1 1.8 1.1l.4 1.8" fill="none" stroke="#1f1f1f" stroke-width="1.2"/><rect x="1797" y="47.5" width="11" height="11" rx="1.5" fill="#f7f7f7" stroke="#1f1f1f" stroke-width="1.2"/><path d="M1802.5 50v6M1799.5 53h6" stroke="#1f1f1f" stroke-width="1.2"/>
<circle cx="1846" cy="51" r="11.2" fill="#d3d3d3"/><circle cx="1846" cy="47.3" r="4" fill="#8a8a8a"/><path d="M1838.3 58.5a8.5 5.5 0 0 1 15.4 0a11.2 11.2 0 0 1-15.4 0z" fill="#8a8a8a"/>
<circle cx="1886.5" cy="51" r="1.3" fill="#222"/><circle cx="1892" cy="51" r="1.3" fill="#222"/><circle cx="1897.5" cy="51" r="1.3" fill="#222"/>
<defs><path id="sealp" d="M129.2 108.5A23.2 23.2 0 0 1 175.6 108.5"/><pattern id="dots" width="1.6" height="1.6" patternUnits="userSpaceOnUse"><rect width="1.6" height="1.6" fill="#ececec"/><rect width="0.9" height="0.9" fill="#bdbdbd"/></pattern></defs>
<text font-family="Liberation Serif" font-size="5.6" font-weight="bold" fill="#c4c4c4"><textPath href="#sealp" textLength="70" lengthAdjust="spacingAndGlyphs">ESTADOS UNIDOS MEXICANOS</textPath></text>
<path d="M129.8 113A23 23 0 0 0 175 113" fill="none" stroke="#d0d0d0" stroke-width="4.2" stroke-dasharray="4.5 1.2" stroke-linecap="round"/>
<ellipse cx="155" cy="103" rx="13" ry="12" fill="url(#dots)" opacity="0.8" transform="rotate(-25 155 103)"/><path d="M136 100l6 6 M135 110c5 2 10 7 14 12 M145 124c5 2 10 2 15 0 M160 120c3-3 6-8 8-12" fill="none" stroke="#d2d2d2" stroke-width="2"/><path d="M140 115c8 4 16 4 24-2" fill="none" stroke="#d8d8d8" stroke-width="2.2"/>
<rect x="227.9" y="84.9" width="47.3" height="46.2" fill="none" stroke="#2a2a2d" stroke-width="6.3"/>
<defs><clipPath id="lb"><rect x="224.6" y="100" width="6.6" height="25"/></clipPath></defs>
<path d="M220.7 93.2C217 97 216 102 218.5 105.5C220.5 107.5 224 108.6 231 109.1C245 109.3 258 104 272.2 98.8L272.2 104C258 109.5 245 113 231 113C224 112.5 218 110.5 215.8 106.5C214 103 215.5 97 220.7 93.2Z" fill="#2a2a2d"/><path d="M216.2 104.5C215.8 109 218 113 223 115.2C225.5 116 228 116 231 116C246 115.8 259 111 272.2 105.4L272.2 111C259 116.5 246 119.8 231 119.8C226 119.6 221.5 118.8 218.5 117C214.5 114 213.8 109 216.2 104.5Z" fill="#2a2a2d"/><g clip-path="url(#lb)" fill="#fff"><path d="M220.7 93.2C217 97 216 102 218.5 105.5C220.5 107.5 224 108.6 231 109.1C245 109.3 258 104 272.2 98.8L272.2 104C258 109.5 245 113 231 113C224 112.5 218 110.5 215.8 106.5C214 103 215.5 97 220.7 93.2Z"/><path d="M216.2 104.5C215.8 109 218 113 223 115.2C225.5 116 228 116 231 116C246 115.8 259 111 272.2 105.4L272.2 111C259 116.5 246 119.8 231 119.8C226 119.6 221.5 118.8 218.5 117C214.5 114 213.8 109 216.2 104.5Z"/></g>
<circle cx="1732.2" cy="104" r="3.6" fill="#333"/><path d="M1726 114.5v-2.5a4.5 4 0 0 1 4.5-4h3.4a4.5 4 0 0 1 4.5 4v2.5z" fill="#333"/>
<path d="M1759.2 175a5.7 5.7 0 1 1 8.6 0z" fill="#333"/><path d="M1763.5 173.5l1.5-5" stroke="#fff" stroke-width="1.2"/><circle cx="1760.3" cy="170.5" r=".7" fill="#fff"/><circle cx="1763.5" cy="168" r=".7" fill="#fff"/><circle cx="1766.8" cy="170.5" r=".7" fill="#fff"/>
<defs><linearGradient id="gg" x1="0" y1="1" x2="1" y2="0"><stop offset="0" stop-color="#00d65d"/><stop offset="0.4" stop-color="#00e164"/><stop offset="0.56" stop-color="#36e46f"/><stop offset="1" stop-color="#62ea7c"/></linearGradient></defs>
<circle cx="178.6" cy="341" r="94" fill="none" stroke="#28cf6a" stroke-width="2.2"/><circle cx="178.6" cy="341" r="89.5" fill="url(#gg)"/>
<path d="M925.5 255h7l-3.5 4z" fill="#888"/>
<path d="M925.5 299h7l-3.5 4z" fill="#888"/>
<path d="M925.5 343h7l-3.5 4z" fill="#888"/>
<path d="M1544.5 255h7l-3.5 4z" fill="#888"/>
<path d="M1544.5 299h7l-3.5 4z" fill="#888"/>
<path d="M1544.5 343h7l-3.5 4z" fill="#888"/>
<circle cx="1773.2" cy="259.5" r="5.3" fill="none" stroke="#fff" stroke-width="2.8"/><path d="M1777 263.5l4.2 4.2" stroke="#fff" stroke-width="3.2" stroke-linecap="round"/>
<path d="M1812.2 308.5a4.5 4.5 0 0 0-8.4 1" fill="none" stroke="#fff" stroke-width="2.2"/><path d="M1813.5 305v5h-5z" fill="#fff"/><path d="M1803.8 313.5a4.5 4.5 0 0 0 8.4-1" fill="none" stroke="#fff" stroke-width="2.2"/><path d="M1802.5 317v-5h5z" fill="#fff"/>
<path d="M42.2 474l-5.8 5h1.6v4h3.2v-3h2v3h3.2v-4h1.6z" fill="#444"/><path d="M45.5 475v-2h1.5v3.3z" fill="#444"/>
<path d="M1759.5 471.5h3v5h3l-4.5 4.5-4.5-4.5h3z" fill="#fff"/><path d="M1755 479.5h4l2 2 2-2h4.3v3.8h-12.3z" fill="#fff"/>
<path d="M123 543l4.3 4.3 4.3-4.3" fill="none" stroke="#333" stroke-width="1.6"/>
<circle cx="335.8" cy="588.3" r="5.8" fill="none" stroke="#2a7fb0" stroke-width="2.4"/><path d="M340 592.5l5 5" stroke="#2a7fb0" stroke-width="3" stroke-linecap="round"/>
<circle cx="555.8" cy="588.3" r="5.8" fill="none" stroke="#2a7fb0" stroke-width="2.4"/><path d="M560 592.5l5 5" stroke="#2a7fb0" stroke-width="3" stroke-linecap="round"/>
<circle cx="779.8" cy="588.3" r="5.8" fill="none" stroke="#2a7fb0" stroke-width="2.4"/><path d="M784 592.5l5 5" stroke="#2a7fb0" stroke-width="3" stroke-linecap="round"/>
<circle cx="979.8" cy="588.3" r="5.8" fill="none" stroke="#2a7fb0" stroke-width="2.4"/><path d="M984 592.5l5 5" stroke="#2a7fb0" stroke-width="3" stroke-linecap="round"/>
<circle cx="1250.8" cy="588.3" r="5.8" fill="none" stroke="#2a7fb0" stroke-width="2.4"/><path d="M1255 592.5l5 5" stroke="#2a7fb0" stroke-width="3" stroke-linecap="round"/>
<circle cx="1490.8" cy="588.3" r="5.8" fill="none" stroke="#2a7fb0" stroke-width="2.4"/><path d="M1495 592.5l5 5" stroke="#2a7fb0" stroke-width="3" stroke-linecap="round"/>
<circle cx="1738.8" cy="588.3" r="5.8" fill="none" stroke="#2a7fb0" stroke-width="2.4"/><path d="M1743 592.5l5 5" stroke="#2a7fb0" stroke-width="3" stroke-linecap="round"/>
<circle cx="53" cy="634.8" r="7.6" fill="#e43b3b" stroke="#e6c9c9" stroke-width="1.2"/><path d="M49 634.8h8" stroke="#fff" stroke-width="2.4"/>
<path d="M38.5 675.5h9M44 670.5l5 5-5 5" fill="none" stroke="#333" stroke-width="2.6" stroke-linejoin="miter"/>
<path d="M49 953.5v7l-4-3.5z" fill="#505050"/><path d="M1857 953.5v7l4-3.5z" fill="#505050"/>
<path d="M1907.5 82l4-4.5 4 4.5z" fill="#a3a3a3"/><path d="M1907.5 981l4 4.5 4-4.5z" fill="#505050"/>
<path d="M24 1008h8l4 4v12h-12z" fill="#fff" stroke="#a8a8a8" stroke-width="1"/><rect x="20" y="1011" width="8" height="9" fill="#1d7044"/><path d="M22 1013l4 5M26 1013l-4 5" stroke="#fff" stroke-width="1.1"/><path d="M29.5 1017h3M29.5 1020h4" stroke="#5aa17a" stroke-width="1"/>
<circle cx="206.5" cy="1015.5" r="1.2" fill="#222"/><circle cx="211.5" cy="1015.5" r="1.2" fill="#222"/><circle cx="216.5" cy="1015.5" r="1.2" fill="#222"/>
<path d="M256 1008h8l4 4v12h-12z" fill="#fff" stroke="#a8a8a8" stroke-width="1"/><rect x="252" y="1011" width="8" height="9" fill="#1d7044"/><path d="M254 1013l4 5M258 1013l-4 5" stroke="#fff" stroke-width="1.1"/><path d="M261.5 1017h3M261.5 1020h4" stroke="#5aa17a" stroke-width="1"/>
<circle cx="438.5" cy="1015.5" r="1.2" fill="#222"/><circle cx="443.5" cy="1015.5" r="1.2" fill="#222"/><circle cx="448.5" cy="1015.5" r="1.2" fill="#222"/>
<path d="M1894 1009.5l12.5 12.5M1906.5 1009.5l-12.5 12.5" stroke="#333" stroke-width="1.4"/>
<path d="M16 1053.2l7-1v7.3h-7zM24 1052.1l8.5-1.2v8.6h-8.5zM16 1060.5h7v7.3l-7-1zM24 1060.5h8.5v8.6l-8.5-1.2z" fill="#ffffff"/>
<circle cx="71.5" cy="1056.5" r="6" fill="none" stroke="#222" stroke-width="1.5"/><path d="M67.3 1060.8l-7 7" stroke="#222" stroke-width="1.6"/>
<circle cx="415.8" cy="1059.2" r="7.5" fill="none" stroke="#fff" stroke-width="1.8"/>
<path d="M456 1052.5h12M456 1066.5h12M457.5 1055.5h9v8h-9z M470.5 1051.5v2M470.5 1056v8M470.5 1066v2" fill="none" stroke="#fff" stroke-width="1.5"/>
<g transform="rotate(-25 514 1058)"><rect x="506" y="1049" width="15" height="10" fill="#e8ecef" stroke="#b8c0c8" stroke-width="0.6"/><rect x="504" y="1058" width="20" height="2.2" fill="#d62828"/><rect x="504" y="1060.2" width="20" height="2" fill="#f0d020"/><rect x="504" y="1062.2" width="20" height="1.8" fill="#2f9a3a"/></g><rect x="507" y="1061" width="17" height="10" fill="#c8b8d8" transform="rotate(18 515 1066)" opacity="0.9"/><g fill="#555"><circle cx="510" cy="1064" r=".7"/><circle cx="514" cy="1065" r=".7"/><circle cx="518" cy="1066" r=".7"/><circle cx="512" cy="1068" r=".7"/><circle cx="516" cy="1069" r=".7"/></g>
<circle cx="563.5" cy="1059.5" r="11.3" fill="#db4437"/><path d="M563.5 1048.2a11.3 11.3 0 0 1 9.8 5.65h-9.8z" fill="#db4437"/><path d="M553.7 1053.85a11.3 11.3 0 0 0 4.1 15.4l5.7-9.8z" fill="#0f9d58"/><path d="M573.3 1053.85a11.3 11.3 0 0 1-15.5 15.4l5.7-9.8z" fill="#f4c20d"/><path d="M553.7 1053.85a11.3 11.3 0 0 1 19.6 0h-9.8z" fill="#db4437"/><circle cx="563.5" cy="1059.5" r="5.2" fill="#fff"/><circle cx="563.5" cy="1059.5" r="4" fill="#4285f4"/>
<rect x="603.8" y="1047.6" width="18.2" height="24.4" rx="1.5" fill="#7b8796"/><rect x="605.5" y="1049.5" width="14.8" height="5" fill="#4cc6f5"/><g fill="#d4dbe3"><rect x="605.5" y="1056.5" width="4.2" height="3.6"/><rect x="610.6" y="1056.5" width="4.2" height="3.6"/><rect x="615.7" y="1056.5" width="4.6" height="3.6"/><rect x="605.5" y="1061.2" width="4.2" height="3.6"/><rect x="610.6" y="1061.2" width="4.2" height="3.6"/><rect x="605.5" y="1065.9" width="4.2" height="3.6"/><rect x="610.6" y="1065.9" width="4.2" height="3.6"/></g><rect x="615.7" y="1061.2" width="4.6" height="8.3" fill="#0f4c9c"/>
<defs><radialGradient id="pb" cx="0.35" cy="0.3" r="0.8"><stop offset="0" stop-color="#9fe0ff"/><stop offset="1" stop-color="#1560b0"/></radialGradient><radialGradient id="pg" cx="0.35" cy="0.3" r="0.8"><stop offset="0" stop-color="#b8f0a0"/><stop offset="1" stop-color="#2a8a2a"/></radialGradient></defs><circle cx="655" cy="1054" r="2.8" fill="url(#pg)"/><path d="M651.5 1058.5h7l-1 9h-5z" fill="url(#pg)"/><circle cx="663.5" cy="1051.5" r="3.8" fill="url(#pb)"/><path d="M658.5 1057h10l-1.5 14h-7z" fill="url(#pb)"/>
<defs><linearGradient id="eg" x1="0" y1="0" x2="1" y2="0.4"><stop offset="0" stop-color="#38c8f2"/><stop offset="0.5" stop-color="#2ec4c8"/><stop offset="1" stop-color="#5ad850"/></linearGradient><linearGradient id="eb" x1="0" y1="0" x2="0" y2="1"><stop offset="0" stop-color="#1a8fe6"/><stop offset="1" stop-color="#1466c4"/></linearGradient></defs><circle cx="711.2" cy="1060" r="12.2" fill="url(#eb)"/><path d="M699.2 1058.2A12.2 12.2 0 0 1 723.4 1060C723.4 1063.5 720.5 1065 717 1064.6C714 1064.2 712.6 1062.3 713.6 1060.2C714.6 1057.5 712.5 1055.2 708.5 1055.2C704.5 1055.2 701.2 1056.6 699.2 1058.2Z" fill="url(#eg)"/><path d="M708.5 1056.5C704.8 1057.8 704.2 1063 706.8 1066.8C710 1071 717 1071.4 721.2 1066.2C717 1067.5 712.2 1066.2 710.2 1063z" fill="#0d4fa2"/><circle cx="710.9" cy="1059.9" r="2.7" fill="#5f5646"/>
<g transform="rotate(-28 760 1057)"><ellipse cx="760" cy="1058.5" rx="10.5" ry="6" fill="#b09090"/><ellipse cx="760" cy="1056.5" rx="10.5" ry="6" fill="#f2eeee" stroke="#d03a3a" stroke-width="1.3"/></g><path d="M760 1053l4.5 12M766 1053l-5 12" stroke="#8a8a8a" stroke-width="1"/><ellipse cx="761.5" cy="1067.5" rx="2.2" ry="3.2" fill="none" stroke="#2f7fc8" stroke-width="1.6" transform="rotate(-20 761.5 1067.5)"/><ellipse cx="768" cy="1064.5" rx="3.2" ry="2.2" fill="none" stroke="#2f7fc8" stroke-width="1.6" transform="rotate(-20 768 1064.5)"/>
<defs><linearGradient id="pp" x1="0" x2="1"><stop offset="0" stop-color="#2fb52f"/><stop offset="0.35" stop-color="#6fe86f"/><stop offset="1" stop-color="#22a022"/></linearGradient></defs><path d="M803 1056h12v13.5a6 2 0 0 1-12 0z" fill="url(#pp)"/><path d="M800.5 1049.5h17v5.5a8.5 2.5 0 0 1-17 0z" fill="url(#pp)"/><ellipse cx="809" cy="1049.5" rx="8.5" ry="2.2" fill="#1e8a1e"/>
<path d="M854 1050c3-1 5 1 6 4 1 3 2 6 4 9l-2 2c-2 0-4-1-5-3-2-3-3-7-3-12z" fill="#1e9a50"/><path d="M857.5 1053c0 4 1 8 3 11" stroke="#9fe0b0" stroke-width=".6" fill="none"/><path d="M848 1068.5h20" stroke="#6a6a5a" stroke-width="1.2" stroke-dasharray="1.5 .8"/>
<path d="M895 1063c-1-6 5-11 12-11 6 0 11 3 11 7 0 3-3 4-5 4-2 0-3 2-2 4 1 3-2 5-6 5-5 0-9-4-10-9z" fill="#c9dff0" stroke="#8fb0c8" stroke-width=".6"/><circle cx="900" cy="1060.5" r="1.6" fill="#e04040"/><circle cx="904" cy="1057" r="1.5" fill="#50c040"/><circle cx="909" cy="1055.5" r="1.5" fill="#f0c020"/><circle cx="905" cy="1062.5" r="1.3" fill="#203050"/><path d="M908 1071l9.5-19" stroke="#d8903a" stroke-width="2"/><path d="M916.5 1053l2.5-4.5 1.5 1.5z" fill="#e8c080"/>
<path d="M1694.5 1062l6.5-6.5 6.5 6.5" fill="none" stroke="#fff" stroke-width="1.3"/>
<rect x="1720" y="1057" width="7.5" height="7" rx="1.2" fill="none" stroke="#fff" stroke-width="1.2"/><path d="M1727.5 1059l3-1.5v6l-3-1.5" fill="none" stroke="#fff" stroke-width="1.1"/><path d="M1721 1054a7 4 0 0 1 9 0M1721 1067a7 4 0 0 0 9 0" fill="none" stroke="#fff" stroke-width="1.1"/>
<path d="M1744 1064h11a3 3 0 0 0 .5-6 4.5 4.5 0 0 0-8.5-1.5 3.5 3.5 0 0 0-3 7.5z" fill="#fff"/>
<path d="M1879 1051.5h16v11.5h-9l-4 4v-4h-3z" fill="#ffffff"/><path d="M1881.5 1055h11M1881.5 1058h11M1881.5 1061h7" stroke="#403222" stroke-width="1"/><circle cx="1894.5" cy="1067" r="6.6" fill="#2e2a26" stroke="#8a8580" stroke-width="0.8"/></svg>
<div class="t" style="left:114.4px;top:325.2px;font-size:40.99px;letter-spacing:-0.350px;font-weight:normal;color:#ffffff;font-family:'Liberation Sans',sans-serif;transform:scaleX(0.9534);transform-origin:0 0;-webkit-text-stroke:0.4px #fff">100.0%</div>
<div class="t" style="left:1891.6px;top:1061.5px;font-size:11.05px;letter-spacing:0.000px;font-weight:normal;color:#ffffff;font-family:'Liberation Sans',sans-serif;">3</div>
</body></html>
